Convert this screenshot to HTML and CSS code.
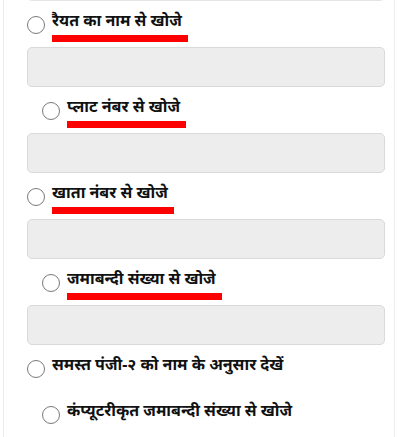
FILE: index.html
```html
<!DOCTYPE html>
<html lang="hi">
<head>
    <meta charset="UTF-8">
    <meta name="viewport" content="width=device-width, initial-scale=1.0">
    <title>खोज</title>
    <link rel="stylesheet" href="styles.css">
</head>
<body>
    <div class="panel">
        <input type="text" class="field field-top">

        <label class="option">
            <input type="radio" name="search">
            <span class="caption marked">रैयत का नाम से खोजे</span>
        </label>
        <input type="text" class="field">

        <label class="option indent">
            <input type="radio" name="search">
            <span class="caption marked">प्लाट नंबर से खोजे</span>
        </label>
        <input type="text" class="field">

        <label class="option">
            <input type="radio" name="search">
            <span class="caption marked">खाता नंबर से खोजे</span>
        </label>
        <input type="text" class="field">

        <label class="option indent">
            <input type="radio" name="search">
            <span class="caption marked">जमाबन्दी संख्या से खोजे</span>
        </label>
        <input type="text" class="field">

        <label class="option">
            <input type="radio" name="search">
            <span class="caption">समस्त पंजी-२ को नाम के अनुसार देखें</span>
        </label>

        <label class="option indent">
            <input type="radio" name="search">
            <span class="caption">कंप्यूटरीकृत जमाबन्दी संख्या से खोजे</span>
        </label>
        <input type="text" class="field">
    </div>
</body>
</html>
```

FILE: styles.css
```css
body {
    margin: 0;
    background-color: #ffffff;
    font-family: "Noto Sans", "Noto Sans Devanagari", sans-serif;
    overflow: hidden;
}
.panel {
    margin: 0 5px 0 3px;
    border-left: 1px solid #ececec;
    border-right: 1px solid #ececec;
    height: 437px;
    overflow: hidden;
    padding: 0 9px 0 23px;
    display: flex;
    flex-direction: column;
}
.field {
    display: block;
    box-sizing: border-box;
    flex: none;
    width: 100%;
    height: 40px;
    margin: 0;
    border: 1px solid #d9d9d9;
    border-radius: 5px;
    background-color: #ededed;
}
.field-top {
    margin-top: -39px;
    background-color: #ffffff;
    border-color: #e4e4e4;
}
.option {
    display: flex;
    align-items: flex-start;
    flex: none;
    height: 46px;
    box-sizing: border-box;
    padding-top: 8px;
}
.option.indent {
    padding-left: 15px;
}
.option input {
    appearance: none;
    -webkit-appearance: none;
    width: 18px;
    height: 18px;
    margin: 7px 7px 0 0;
    border: 1px solid #7a7a7a;
    border-radius: 50%;
    background-color: #ffffff;
    flex: none;
}
.caption {
    font-size: 16px;
    font-weight: bold;
    line-height: 22px;
    color: #111111;
    white-space: nowrap;
}
.caption.marked {
    padding-right: 6px;
    padding-bottom: 4px;
    border-bottom: 7px solid #ff0000;
}
```
